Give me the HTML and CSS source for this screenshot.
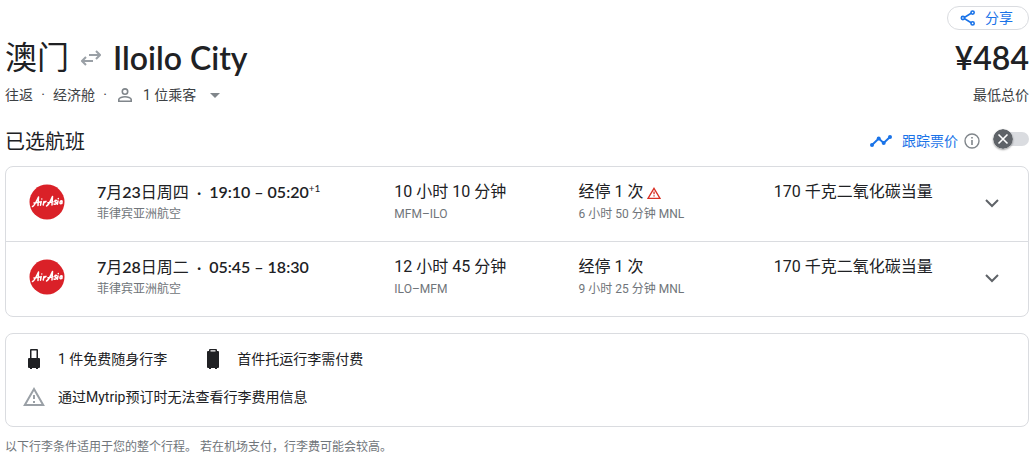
FILE: index.html
```html
<!DOCTYPE html>
<html lang="zh-CN">
<head>
<meta charset="utf-8">
<title>澳门 – Iloilo City</title>
<link rel="stylesheet" href="styles.css">
</head>
<body>
<main class="page">
  <div class="actions">
    <button class="share" type="button">
      <svg width="16" height="16" viewBox="0 0 16 16" fill="none" stroke="currentColor" stroke-width="1.6"><path d="M11.6 3 3.4 8l8.2 5"/><g fill="#fff"><circle cx="12.6" cy="2.6" r="1.6"/><circle cx="12.6" cy="13.4" r="1.6"/><circle cx="2.9" cy="8" r="1.6"/></g></svg>
      <span>分享</span>
    </button>
  </div>
  <header class="heading">
    <h1 class="route">
      <span>澳门</span>
      <svg class="swap" width="20" height="16" viewBox="0 0 20 16" fill="none" stroke="#9aa0a6" stroke-width="2"><path d="M8 5h10.500M15 1l4 4-4 4M12 11H1.500M5 7l-4 4 4 4"/></svg>
      <span class="latin">Iloilo City</span>
    </h1>
    <strong class="price">¥484</strong>
  </header>
  <div class="meta">
    <div class="trip">
      <span>往返</span><span class="dot">·</span><span>经济舱</span><span class="dot">·</span>
      <button class="passengers" type="button">
        <svg width="14" height="14" viewBox="0 0 14 14" fill="none" stroke="#80868b" stroke-width="1.6"><circle cx="7" cy="3.600" r="2.700"/><path d="M.8 13.200v-1.700C.8 9.700 4.500 8.800 7 8.800s6.200.9 6.200 2.700v1.700z"/></svg>
        <span>1 位乘客</span>
        <svg class="caret" width="10" height="5" viewBox="0 0 10 5"><path d="M0 0h10L5 5z" fill="#80868b"/></svg>
      </button>
    </div>
    <span>最低总价</span>
  </div>
  <div class="section-head">
    <h2>已选航班</h2>
    <div class="track">
      <svg width="22" height="12" viewBox="0 0 22 12" fill="#1a73e8"><path d="M2 10 8.700 3.500l5 4.500L20 2" fill="none" stroke="#1a73e8" stroke-width="2"/><circle cx="2" cy="10" r="2"/><circle cx="8.700" cy="3.500" r="2"/><circle cx="13.700" cy="8" r="2"/><circle cx="20" cy="2" r="2"/></svg>
      <label for="track">跟踪票价</label>
      <button class="info" type="button" aria-label="信息"><svg width="16" height="16" viewBox="0 0 16 16"><circle cx="8" cy="8" r="7" fill="none" stroke="#80868b" stroke-width="1.4"/><path d="M7.200 7h1.600v5H7.200zM7.200 4h1.600v1.600H7.200z" fill="#80868b"/></svg></button>
      <span class="switch">
        <input id="track" type="checkbox" role="switch">
        <svg class="knob" width="20" height="20" viewBox="0 0 20 20"><circle cx="10" cy="10" r="10" fill="#5f6368"/><path d="m5.500 5.500 9 9m0-9-9 9" stroke="#fff" stroke-width="1.600"/></svg>
      </span>
    </div>
  </div>

  <section class="card flights">
    <article class="flight">
      <svg class="logo" width="36" height="36" viewBox="0 0 36 36" role="img" aria-label="AirAsia"><circle cx="18" cy="18" r="17.500" fill="#da2128"/><g fill="none" stroke="#fff" stroke-width="1.500" stroke-linecap="round" stroke-linejoin="round"><path d="M3.500 22.500c2-.5 4.500-6.500 6-9.500l-.5 8.500M5 19l6-1M12.200 17.500l-.7 3.700M12.800 15v.1M14.200 21l.8-3.500-.2 1.300 2.200-1.500M17.500 22c2.500-1 4.500-6 6-9.500l-.5 8.500M19 18.800l5-1M27.500 16.500c-1.500-.5-2.500 1-.8 1.700 1.500.8 0 2.500-1.700 1.800M29 17l-.6 3.200M29.300 14.600v.1M33 17c-1.500-.7-2.800 2-1.600 2.700.8.4 1.500-1 1.700-2.200l-.2 2"/></g></svg>
      <div class="when"><h3><b>7</b>月<b>23</b>日周四<b class="sep">·</b><b>19:10 – 05:20</b><sup>+1</sup></h3><p>菲律宾亚洲航空</p></div>
      <div><h4>10 小时 10 分钟</h4><p>MFM–ILO</p></div>
      <div><h4>经停 1 次 <svg class="alert" width="14" height="12" viewBox="0 0 14 12"><path d="M7 1.300 13 11.300H1z" fill="none" stroke="#d93025" stroke-width="1.300"/><path d="M6.400 4.500h1.300v2.800H6.400zM6.400 8.300h1.300v1.300H6.400z" fill="#d93025"/></svg></h4><p>6 小时 50 分钟 MNL</p></div>
      <div><h4>170 千克二氧化碳当量</h4></div>
      <button class="expand" type="button" aria-label="展开"><svg width="14" height="9" viewBox="0 0 14 9"><path d="m1 1 6 6 6-6" fill="none" stroke="#5f6368" stroke-width="2"/></svg></button>
    </article>
    <article class="flight">
      <svg class="logo" width="36" height="36" viewBox="0 0 36 36" role="img" aria-label="AirAsia"><circle cx="18" cy="18" r="17.500" fill="#da2128"/><g fill="none" stroke="#fff" stroke-width="1.500" stroke-linecap="round" stroke-linejoin="round"><path d="M3.500 22.500c2-.5 4.500-6.500 6-9.500l-.5 8.500M5 19l6-1M12.200 17.500l-.7 3.700M12.800 15v.1M14.200 21l.8-3.500-.2 1.300 2.200-1.500M17.500 22c2.500-1 4.500-6 6-9.500l-.5 8.500M19 18.800l5-1M27.500 16.500c-1.500-.5-2.500 1-.8 1.700 1.500.8 0 2.500-1.700 1.800M29 17l-.6 3.200M29.300 14.600v.1M33 17c-1.500-.7-2.800 2-1.600 2.700.8.4 1.500-1 1.700-2.200l-.2 2"/></g></svg>
      <div class="when"><h3><b>7</b>月<b>28</b>日周二<b class="sep">·</b><b>05:45 – 18:30</b></h3><p>菲律宾亚洲航空</p></div>
      <div><h4>12 小时 45 分钟</h4><p>ILO–MFM</p></div>
      <div><h4>经停 1 次</h4><p>9 小时 25 分钟 MNL</p></div>
      <div><h4>170 千克二氧化碳当量</h4></div>
      <button class="expand" type="button" aria-label="展开"><svg width="14" height="9" viewBox="0 0 14 9"><path d="m1 1 6 6 6-6" fill="none" stroke="#5f6368" stroke-width="2"/></svg></button>
    </article>
  </section>

  <section class="card baggage">
    <div class="bags">
      <span class="bag"><svg width="24" height="24" viewBox="0 0 24 24" fill="#202124"><path d="M8 11V3q0-1 1-1h6q1 0 1 1v8h1q1 0 1 1v8q0 1-1 1h-1v1h-2v-1h-4v1H8v-1H7q-1 0-1-1v-8q0-1 1-1zM9.500 3.500V11h5V3.500z" fill-rule="evenodd"/></svg>1 件免费随身行李</span>
      <span class="bag"><svg width="24" height="24" viewBox="0 0 24 24" fill="#202124"><path d="M8 4V3q0-1 1-1h6q1 0 1 1v1h1q1 0 1 1v15q0 1-1 1h-1v1h-2v-1h-4v1H8v-1H7q-1 0-1-1V5q0-1 1-1zM9.500 3.200V4.500h5V3.200z" fill-rule="evenodd"/></svg>首件托运行李需付费</span>
    </div>
    <div class="bag"><svg width="24" height="24" viewBox="0 0 24 24"><path d="M12 4 21.200 20H2.800z" fill="none" stroke="#9aa0a6" stroke-width="2"/><path d="M11 10h2v4h-2zM11 16h2v2h-2z" fill="#9aa0a6"/></svg>通过Mytrip预订时无法查看行李费用信息</div>
  </section>
  <p class="note">以下行李条件适用于您的整个行程。 若在机场支付，行李费可能会较高。</p>
</main>
</body>
</html>
```

FILE: styles.css
```css
* { box-sizing: border-box; }
body {
  margin: 0;
  background: #fff;
  color: #202124;
  font: 14px/20px Roboto, "Noto Sans CJK SC", sans-serif;
}
h1, h2, h3, h4, p { margin: 0; font-weight: 400; }
button { margin: 0; padding: 0; border: 0; background: none; color: inherit; font: inherit; cursor: pointer; }
svg { flex: none; display: block; }
.page { padding: 6px 3px 0 5px; }
.actions { display: flex; justify-content: flex-end; }
.share {
  display: flex; align-items: center; gap: 9px;
  height: 24px; padding: 0 15px 0 12px;
  border: 1px solid #dadce0; border-radius: 12px;
  color: #1a73e8;
}
.heading, .meta, .section-head { display: flex; justify-content: space-between; align-items: center; }
.heading { height: 44px; margin-top: 6px; }
.route { display: flex; align-items: center; gap: 12px; font-size: 32px; line-height: 44px; }
.latin, .price { font-family: Lato, sans-serif; font-weight: 600; }
.price { font-size: 32px; }
.meta { color: #3c4043; margin-top: 5px; }
.trip, .passengers { display: flex; align-items: center; }
.dot { width: 20px; text-align: center; }
.passengers { gap: 11px; margin-left: 3px; }
.caret { margin-left: 3px; }
.section-head { height: 32px; margin-top: 20px; }
h2 { margin-top: 2px; font-size: 20px; line-height: 28px; }
.track { display: flex; align-items: center; color: #1a73e8; }
.track label { margin: 0 6px 0 10px; }
.switch { position: relative; width: 36px; height: 20px; margin: 0 0 4px 13px; }
.switch input {
  appearance: none; display: block; width: 32px; height: 14px; margin: 3px 0 0 4px;
  border-radius: 7px; background: #dadce0;
}
.knob { position: absolute; top: 0; left: 0; pointer-events: none; border-radius: 50%; box-shadow: 0 1px 2px #0006; }
.card { border: 1px solid #dadce0; border-radius: 8px; }
.flights { margin-top: 9px; }
.flight {
  display: grid; grid-template-columns: 68px 297fr 184fr 195fr 202fr 32px;
  padding: 15px 20px 17px 23px;
}
.flight + .flight { border-top: 1px solid #dadce0; }
.logo { margin-top: 2px; }
h3, h4 { font-size: 16px; line-height: 20px; white-space: nowrap; }
h3 { font-family: Lato, "Noto Sans CJK SC", sans-serif; }
h3 b { font-weight: 600; }
.sep { margin: 0 8px; }
sup { font-size: 10px; line-height: 0; }
.flight p { margin-top: 2px; font-size: 12px; line-height: 20px; color: #70757a; }
.alert { display: inline-block; vertical-align: -2px; }
.expand { display: flex; align-items: center; justify-content: center; height: 42px; }
.baggage { margin-top: 16px; padding: 13px 16px 17px; }
.bags { display: flex; gap: 34px; margin-bottom: 14px; }
.bag { display: flex; align-items: center; gap: 12px; min-height: 24px; }
.note { margin-top: 10px; font-size: 12px; line-height: 20px; color: #70757a; }
```
